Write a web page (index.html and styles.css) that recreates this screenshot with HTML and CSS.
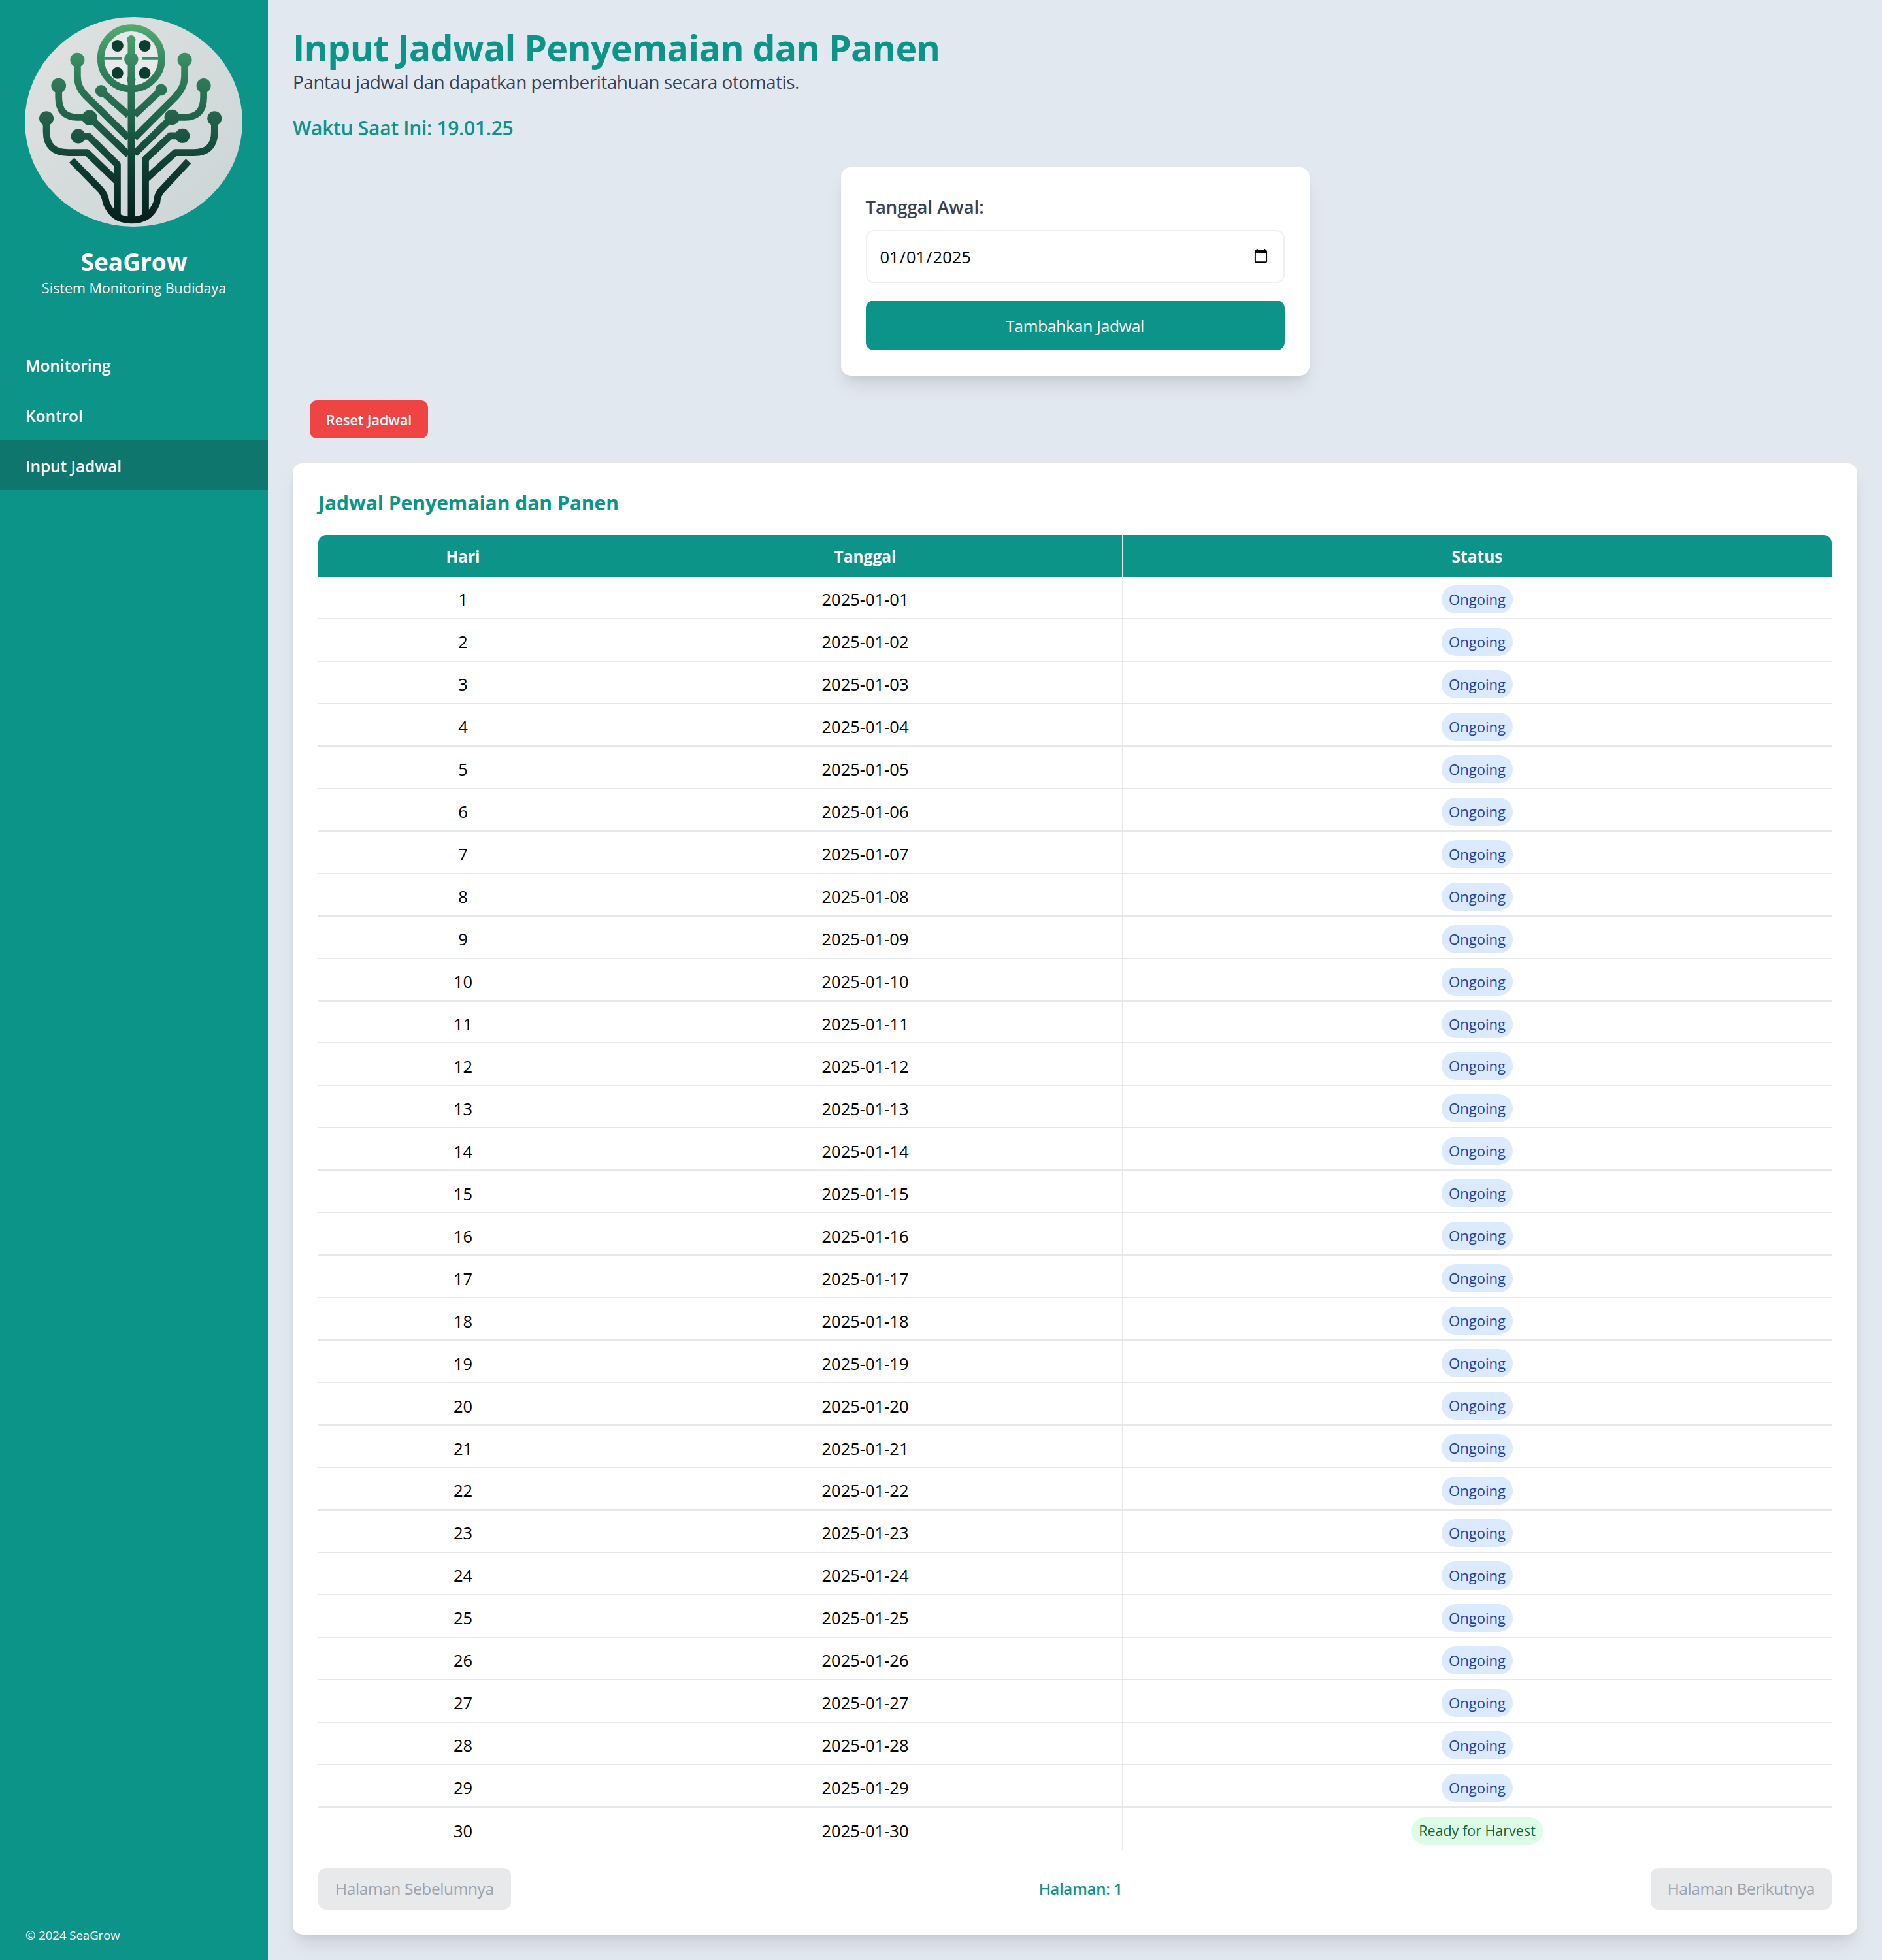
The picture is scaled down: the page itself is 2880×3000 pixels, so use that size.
FILE: index.html
```html
<!DOCTYPE html>
<html lang="id">
<head>
<meta charset="utf-8">
<title>Input Jadwal</title>
<link rel="stylesheet" href="styles.css">
</head>
<body>
<aside class="sidebar">
  <svg class="logo" viewBox="25 18 998 962" xmlns="http://www.w3.org/2000/svg" aria-label="SeaGrow logo">
    <defs>
      <linearGradient id="tree" gradientUnits="userSpaceOnUse" x1="0" y1="50" x2="0" y2="950">
        <stop offset="0" stop-color="#52ab72"/>
        <stop offset="0.25" stop-color="#2f7f5c"/>
        <stop offset="0.5" stop-color="#1f5f48"/>
        <stop offset="0.75" stop-color="#0d3a30"/>
        <stop offset="1" stop-color="#04201d"/>
      </linearGradient>
      <linearGradient id="disc" x1="0" y1="0" x2="1" y2="1">
        <stop offset="0" stop-color="#dfe2e1"/>
        <stop offset="1" stop-color="#cbd5d6"/>
      </linearGradient>
    </defs>
    <ellipse cx="524" cy="499" rx="499" ry="481" fill="url(#disc)"/>
    <circle cx="513" cy="208" r="126" fill="#e6eaea"/>
    <g class="trace">
      <circle cx="513" cy="208" r="140"/>
      <path d="M513 122V950"/>
      <path class="thin" d="M388 208H470M562 208H638"/>
      <path d="M266 215V290Q266 340 305 380L500 572"/>
      <path d="M758 215V290Q758 340 715 385L528 572"/>
      <path d="M375 357L500 468"/>
      <path d="M650 352L528 468"/>
      <path d="M180 333V385Q180 478 265 478H322L500 650"/>
      <path d="M845 333V385Q845 478 760 478H700L528 645"/>
      <path d="M124 483V545Q124 640 225 640H310L445 770"/>
      <path d="M895 483V545Q895 640 800 640H715L582 760"/>
      <path d="M270 565H318L449 695V930"/>
      <path d="M748 563H692L578 670V930"/>
      <path d="M240 675L372 810Q392 832 398 870Q430 950 513 950Q600 950 630 870Q632 832 654 810L775 680"/>
    </g>
    <g class="nodes">
      <circle cx="513" cy="122" r="20"/>
      <circle cx="513" cy="212" r="32"/>
      <circle cx="513" cy="305" r="20"/>
      <circle cx="266" cy="215" r="33"/>
      <circle cx="758" cy="215" r="33"/>
      <circle cx="180" cy="333" r="34"/>
      <circle cx="845" cy="333" r="33"/>
      <circle cx="375" cy="357" r="27"/>
      <circle cx="650" cy="352" r="27"/>
      <circle cx="124" cy="483" r="33"/>
      <circle cx="895" cy="483" r="33"/>
      <circle cx="322" cy="480" r="35"/>
      <circle cx="700" cy="478" r="35"/>
      <circle cx="270" cy="565" r="33"/>
      <circle cx="748" cy="563" r="33"/>
    </g>
    <g class="pins">
      <circle cx="450" cy="150" r="27"/>
      <circle cx="575" cy="150" r="27"/>
      <circle cx="450" cy="275" r="27"/>
      <circle cx="575" cy="275" r="27"/>
    </g>
  </svg>
  <div class="brand">SeaGrow</div>
  <div class="tagline">Sistem Monitoring Budidaya</div>
  <nav class="nav">
    <a class="nav-item" href="#">Monitoring</a>
    <a class="nav-item" href="#">Kontrol</a>
    <a class="nav-item active" href="#">Input Jadwal</a>
  </nav>
  <footer class="copyright">© 2024 SeaGrow</footer>
</aside>
<main class="main">
  <h1 class="title">Input Jadwal Penyemaian dan Panen</h1>
  <p class="subtitle">Pantau jadwal dan dapatkan pemberitahuan secara otomatis.</p>
  <p class="clock">Waktu Saat Ini: 19.01.25</p>
  <form class="form-card">
    <label class="field-label" for="start">Tanggal Awal:</label>
    <input class="date-input" id="start" type="date" value="2025-01-01">
    <button class="add-btn" type="button">Tambahkan Jadwal</button>
  </form>
  <button class="reset-btn" type="button">Reset Jadwal</button>
  <section class="table-card">
    <h2 class="table-title">Jadwal Penyemaian dan Panen</h2>
    <table class="schedule">
      <colgroup><col class="col-day"><col class="col-date"><col></colgroup>
      <thead><tr><th>Hari</th><th>Tanggal</th><th>Status</th></tr></thead>
      <tbody>
        <tr><td>1</td><td>2025-01-01</td><td><span class="badge">Ongoing</span></td></tr>
        <tr><td>2</td><td>2025-01-02</td><td><span class="badge">Ongoing</span></td></tr>
        <tr><td>3</td><td>2025-01-03</td><td><span class="badge">Ongoing</span></td></tr>
        <tr><td>4</td><td>2025-01-04</td><td><span class="badge">Ongoing</span></td></tr>
        <tr><td>5</td><td>2025-01-05</td><td><span class="badge">Ongoing</span></td></tr>
        <tr><td>6</td><td>2025-01-06</td><td><span class="badge">Ongoing</span></td></tr>
        <tr><td>7</td><td>2025-01-07</td><td><span class="badge">Ongoing</span></td></tr>
        <tr><td>8</td><td>2025-01-08</td><td><span class="badge">Ongoing</span></td></tr>
        <tr><td>9</td><td>2025-01-09</td><td><span class="badge">Ongoing</span></td></tr>
        <tr><td>10</td><td>2025-01-10</td><td><span class="badge">Ongoing</span></td></tr>
        <tr><td>11</td><td>2025-01-11</td><td><span class="badge">Ongoing</span></td></tr>
        <tr><td>12</td><td>2025-01-12</td><td><span class="badge">Ongoing</span></td></tr>
        <tr><td>13</td><td>2025-01-13</td><td><span class="badge">Ongoing</span></td></tr>
        <tr><td>14</td><td>2025-01-14</td><td><span class="badge">Ongoing</span></td></tr>
        <tr><td>15</td><td>2025-01-15</td><td><span class="badge">Ongoing</span></td></tr>
        <tr><td>16</td><td>2025-01-16</td><td><span class="badge">Ongoing</span></td></tr>
        <tr><td>17</td><td>2025-01-17</td><td><span class="badge">Ongoing</span></td></tr>
        <tr><td>18</td><td>2025-01-18</td><td><span class="badge">Ongoing</span></td></tr>
        <tr><td>19</td><td>2025-01-19</td><td><span class="badge">Ongoing</span></td></tr>
        <tr><td>20</td><td>2025-01-20</td><td><span class="badge">Ongoing</span></td></tr>
        <tr><td>21</td><td>2025-01-21</td><td><span class="badge">Ongoing</span></td></tr>
        <tr><td>22</td><td>2025-01-22</td><td><span class="badge">Ongoing</span></td></tr>
        <tr><td>23</td><td>2025-01-23</td><td><span class="badge">Ongoing</span></td></tr>
        <tr><td>24</td><td>2025-01-24</td><td><span class="badge">Ongoing</span></td></tr>
        <tr><td>25</td><td>2025-01-25</td><td><span class="badge">Ongoing</span></td></tr>
        <tr><td>26</td><td>2025-01-26</td><td><span class="badge">Ongoing</span></td></tr>
        <tr><td>27</td><td>2025-01-27</td><td><span class="badge">Ongoing</span></td></tr>
        <tr><td>28</td><td>2025-01-28</td><td><span class="badge">Ongoing</span></td></tr>
        <tr><td>29</td><td>2025-01-29</td><td><span class="badge">Ongoing</span></td></tr>
        <tr><td>30</td><td>2025-01-30</td><td><span class="badge ready">Ready for Harvest</span></td></tr>
      </tbody>
    </table>
    <div class="pager">
      <button class="page-btn" type="button" disabled>Halaman Sebelumnya</button>
      <span class="page-label">Halaman: 1</span>
      <button class="page-btn" type="button" disabled>Halaman Berikutnya</button>
    </div>
  </section>
</main>
</body>
</html>
```
FILE: styles.css
```css
* { box-sizing: border-box; }
html, body { margin: 0; padding: 0; }
body {
  display: flex;
  min-height: 3000px;
  background: #e2e8f0;
  font-family: "Open Sans", "Noto Sans", "Liberation Sans", sans-serif;
  color: #374151;
}
.sidebar {
  width: 410px;
  flex: none;
  background: #0d9488;
  color: #fff;
  display: flex;
  flex-direction: column;
  align-items: stretch;
}
.logo { display: block; width: 333px; height: 321px; margin: 26px 0 0 38px; }
.trace { fill: none; stroke: url(#tree); stroke-width: 32; stroke-linejoin: round; stroke-linecap: butt; }
.trace .thin { stroke-width: 14; }
.nodes { fill: url(#tree); }
.pins { fill: #0d3d2f; }
.brand { margin-top: 31px; text-align: center; font-size: 37px; line-height: 46px; font-weight: 700; }
.tagline { margin-top: 2px; text-align: center; font-size: 21.5px; line-height: 30px; }
.nav { margin-top: 63px; display: flex; flex-direction: column; }
.nav-item {
  display: block;
  height: 77px;
  line-height: 82px;
  padding-left: 39px;
  color: #fff;
  text-decoration: none;
  font-size: 24.4px;
  font-weight: 600;
}
.nav-item.active { background: #0f766e; }
.copyright { margin-top: auto; padding: 0 0 26px 39px; font-size: 18.5px; line-height: 24px; }
.main { flex: 1; min-width: 0; padding: 38px 38px 38px; display: flex; flex-direction: column; align-items: stretch; }
.title { margin: 0; color: #0d9488; font-size: 55.5px; line-height: 69px; font-weight: 700; letter-spacing: -0.78px; }
.subtitle { margin: -5px 0 0; font-size: 28px; line-height: 46px; letter-spacing: -0.5px; }
.clock { margin: 25px 0 0; color: #0d9488; font-size: 30px; line-height: 46px; font-weight: 600; letter-spacing: -0.3px; }
.form-card {
  align-self: center;
  width: 717px;
  margin-top: 37px;
  padding: 38px 38px 39px;
  background: #fff;
  border-radius: 15px;
  box-shadow: 0 19px 29px -6px rgba(0,0,0,.1), 0 8px 12px -4px rgba(0,0,0,.05);
  display: flex;
  flex-direction: column;
}
.field-label { font-size: 27.4px; line-height: 46px; font-weight: 600; margin-bottom: 12px; }
.date-input {
  height: 81px;
  width: 100%;
  padding: 0 22px 0 19px;
  border: 2px solid #edeff2;
  border-radius: 12px;
  background: #fff;
  color: #000;
  font-family: inherit;
  font-size: 25.5px;
}
.date-input::-webkit-calendar-picker-indicator { width: 25px; height: 25px; padding: 0; margin: 0; }
.add-btn {
  height: 76px;
  margin-top: 27px;
  border: 0;
  border-radius: 12px;
  background: #0d9488;
  color: #fff;
  font-family: inherit;
  font-size: 24.5px;
  letter-spacing: -0.2px;
}
.reset-btn {
  align-self: flex-start;
  height: 58px;
  margin: 38px 0 0 26px;
  padding: 0 25px;
  border: 0;
  border-radius: 11px;
  background: #ef4444;
  color: #fff;
  font-family: inherit;
  font-size: 21.5px;
  font-weight: 600;
}
.table-card {
  margin-top: 38px;
  padding: 38px 39px;
  background: #fff;
  border-radius: 15px;
  box-shadow: 0 19px 29px -6px rgba(0,0,0,.1), 0 8px 12px -4px rgba(0,0,0,.05);
}
.table-title { margin: 0 0 22px; height: 50px; color: #0d9488; font-size: 30px; line-height: 46px; font-weight: 700; }
.schedule { width: 100%; table-layout: fixed; border-collapse: separate; border-spacing: 0; font-size: 25.5px; color: #000; }
.col-day { width: 444px; }
.col-date { width: 787px; }
.schedule th {
  height: 64px;
  padding: 0;
  background: #0d9488;
  color: #fff;
  font-size: 24.5px;
  font-weight: 700;
  text-align: center;
  border-right: 1px solid #e5e7eb;
}
.schedule th:first-child { border-top-left-radius: 12px; }
.schedule th:last-child { border-top-right-radius: 12px; border-right: 0; }
.schedule td {
  height: 64.96px;
  padding: 6px 0 0;
  text-align: center;
  border-bottom: 2px solid #e5e7eb;
  border-right: 1px solid #e5e7eb;
}
.schedule td:last-child { border-right: 0; }
.schedule tr:last-child td { border-bottom: 0; }
.badge {
  display: inline-block;
  height: 43px;
  padding: 0 11.5px;
  line-height: 42px;
  border-radius: 22px;
  background: #dbeafe;
  color: #1e40af;
  font-size: 22px;
  vertical-align: middle;
}
.badge.ready { background: #dcfce7; color: #166534; font-size: 21.5px; }
.pager { display: flex; justify-content: space-between; align-items: center; margin-top: 27px; }
.page-btn {
  height: 64px;
  padding: 0 26px;
  border: 0;
  border-radius: 12px;
  background: #e8e9eb;
  color: #9ca3af;
  font-family: inherit;
  font-size: 24.5px;
  letter-spacing: -0.4px;
}
.page-label { color: #0d9488; font-size: 24px; font-weight: 600; letter-spacing: -0.3px; }
```
